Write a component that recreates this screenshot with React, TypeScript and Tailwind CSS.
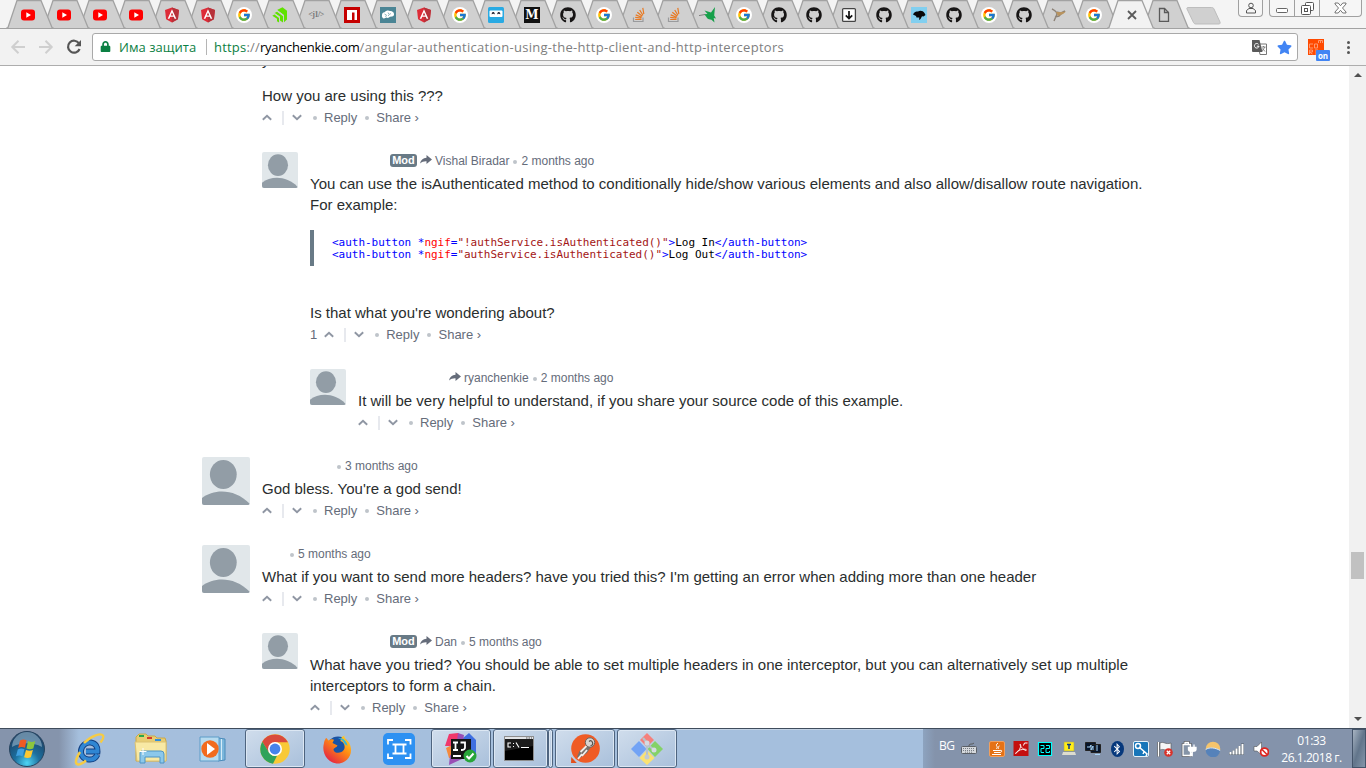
import type { ReactNode } from "react";
import { FaGithub, FaBluetoothB, FaStar, FaLock } from "react-icons/fa";
import { FcGoogle } from "react-icons/fc";

/* ---------- tab icons ---------- */

const YouTube = () => (
  <svg viewBox="0 0 16 16" className="size-4">
    <rect x="1" y="2.500" width="14" height="11" rx="3" fill="#f00" />
    <path d="M6.300 5.200v5.600L11 8z" fill="#fff" />
  </svg>
);
const Angular = () => (
  <svg viewBox="0 0 16 16" className="size-4">
    <path d="M8 .5 15 3l-1.100 9.200L8 15.500 2.100 12.200 1 3z" fill="#dd2c38" />
    <path d="M8 .5 15 3l-1.100 9.200L8 15.500z" fill="#b7323a" />
    <path d="M8 2.300 3.700 11.800h1.700l.8-2.100h3.600l.8 2.100h1.700zM8 5.400l1.300 3H6.700z" fill="#fff" />
  </svg>
);
const Google = () => (
  <span className="flex size-4 items-center justify-center rounded-full bg-white">
    <FcGoogle size={14} />
  </span>
);
const Github = () => <FaGithub size={16} color="#171515" />;
const Envato = () => (
  <svg viewBox="0 0 16 16" className="size-4" fill="#60e200">
    <path d="M5 3 10.500.3 15 3.700v8.800l-3 2.700V8z" />
    <path d="m2.500 6 2.500-1.300 6 4.600v6.200L8 13.500v-4z" />
    <path d="m.3 8.700 2.200-1.200L7 11v4.500l-2-1.300v-2.500z" />
    <path d="m5 3.200 6.500 5.100v7M2.500 6.300l5 3.900v5" fill="none" stroke="#cdcdcd" strokeWidth=".7" />
  </svg>
);
const CodeTag = () => (
  <span className="w-4 text-center font-['Liberation_Serif'] text-[8px] leading-4 font-bold tracking-[-0.5px] whitespace-nowrap text-[#777]">
    &lt;j1/&gt;
  </span>
);
const Npm = () => (
  <svg viewBox="0 0 16 16" className="size-4">
    <path d="M0 0h16v16H0z" fill="#c60000" />
    <path d="M3 3h10v10h-2.500V5.500H8V13H3z" fill="#fff" />
  </svg>
);
const Brain = () => (
  <svg viewBox="0 0 16 16" className="size-4">
    <path d="M0 0h16v16H0z" fill="#4b8595" />
    <path d="M2 8c0-1.500 1-2.500 2.500-2.700C6 3.300 8.500 3 10 4c2-.3 4 1.200 4 3 .3 1.500-.8 2.500-2 2.500l-2 .3c-1 1.200-2.500 1.400-3.500.7L4 11.500C2.500 11.500 1.500 9.500 2 8z" fill="#fff" />
    <path d="m4.500 7 2 1-1 2M8 5.500l1 2 2-1M9 9l-1-1" fill="none" stroke="#6b9ba8" strokeWidth=".7" />
  </svg>
);
const Faces = () => (
  <svg viewBox="0 0 16 16" className="size-4">
    <rect width="16" height="16" rx="1.500" fill="#29aae3" />
    <rect x="1.500" y="3.500" width="13" height="6.500" rx="1" fill="#fff" />
    <path d="M3.800 7.500V6q1.400-2 2.800 0v1.500l-.8-.8h-1.200zM9.400 7.500V6q1.400-2 2.800 0v1.500l-.8-.8h-1.200z" fill="#112" />
  </svg>
);
const Medium = () => (
  <span className="flex size-4 items-center justify-center bg-[#111] font-['DejaVu_Serif'] text-[12px] leading-none font-bold text-white">
    M
  </span>
);
const Stack = () => (
  <svg viewBox="0 0 16 16" className="size-4" fill="none">
    <path d="M2.500 10.500v4h9.500v-4" stroke="#9a9b9d" strokeWidth="1.200" />
    <path d="M4.200 12.500h6.300M4.200 10.300l6.300.9M4.700 7.900l6 2.300M6.300 5.300l5 4M8.700 3l3.300 5.300M11.800.8l1 6.200" stroke="#e87922" strokeWidth="1.200" />
  </svg>
);
const Hummingbird = () => (
  <svg viewBox="0 0 18 16" className="-ml-0.5 h-4 w-[18px] shrink-0" fill="#16a04a">
    <path d="M5 7.300 8.500 7 5.500 3.500l6.500 2L16 0l-.8 8.500L17 11.500l-2.300-.6.800 4.600-3-2.800-2.500-.4C8 11.800 7.500 9.800 6.500 8.700z" />
    <path d="M0 8.600 6 7.500" stroke="#777" strokeWidth=".9" />
  </svg>
);
const Download = () => (
  <svg viewBox="0 0 16 16" className="size-4" fill="none" stroke="#111">
    <rect x="1.600" y="1.600" width="12.800" height="12.800" rx="1" fill="#fff" stroke="#444" strokeWidth="1.300" />
    <path d="M8 4v7.500M4.800 8.300 8 11.500l3.200-3.200" strokeWidth="1.700" />
  </svg>
);
const Kiwi = () => (
  <svg viewBox="0 0 16 16" className="size-4">
    <path d="M0 0h16v16H0z" fill="#82cfef" />
    <path d="M2 7.500C3 5 5 4.500 7 4.500 9.500 3 12 4 13.500 6l1 2-2 1.500-1.500-.3L9.500 12 8 13l.3-2.500H5.500L5 9z" fill="#090909" />
  </svg>
);
const Gazelle = () => (
  <svg viewBox="0 0 16 16" className="size-4" fill="none">
    <path d="M1 2c2 1 3 1 4 3l5 1 4-2M6 7l-3 7M5 6l5 1-2 2-4 1" stroke="#8c8277" strokeWidth="1.400" />
    <path d="m5 5 6 0 4-.5-3 2.500-5 2z" fill="#b8935e" />
  </svg>
);
const Doc = () => (
  <svg viewBox="0 0 16 16" className="size-4" fill="none" stroke="#5a5a5a" strokeWidth="1.300">
    <path d="M3.500 1.500h5l4 4v8.800h-9z" />
    <path d="M8.500 1.500v4h4" />
  </svg>
);
const Cross = () => (
  <svg viewBox="0 0 16 16" className="ml-[5px] size-4 shrink-0" stroke="#5a5a5a" strokeWidth="1.800">
    <path d="m4 4 8 8m0-8-8 8" />
  </svg>
);

const tabs: (() => ReactNode)[] = [
  YouTube, YouTube, YouTube, YouTube, Angular, Angular, Google, Envato, CodeTag, Npm, Brain, Angular,
  Google, Faces, Medium, Github, Google, Stack, Stack, Hummingbird, Google, Github, Github, Download,
  Github, Kiwi, Github, Google, Github, Gazelle, Google, Cross, Doc,
];
const ACTIVE = 31;

function Tab({ index, icon: Icon }: { index: number; icon: () => ReactNode }) {
  const active = index === ACTIVE;
  return (
    <div
      className={`relative h-[29px] shrink-0 pt-[7px] ${index < 17 ? "w-9 pl-2.5" : "w-[35px] pl-[9px]"}`}
      style={{ zIndex: active ? 60 : 50 - index }}
    >
      <svg
        viewBox="0 0 50 29"
        className={`absolute top-0 h-[29px] w-[50px] ${index < 17 ? "-left-1" : "-left-[5px]"}`}
      >
        <path d="M0 28.500 2 27.500 11 .5H35L46 27.500l2 1z" fill={active ? "#f2f2f2" : "#d0d0d0"} />
        <path d="M0 28.500 2 27.500 11 .5H35L46 27.500l2 1" fill="none" stroke="#a2a2a2" strokeWidth="1.300" />
        {!active && <path d="M0 28.500h50" stroke="#a2a2a2" />}
      </svg>
      <div className="relative flex size-4 items-center justify-center">
        <Icon />
      </div>
    </div>
  );
}

function TabStrip() {
  return (
    <div className="relative flex h-[29px] shrink-0 border-b border-[#a2a2a2] bg-[#f4f4f4] pl-2.5">
      {tabs.map((icon, i) => (
        <Tab key={i} index={i} icon={icon} />
      ))}
      <svg viewBox="0 0 36 18" className="mt-[7px] ml-[4px] h-[18px] w-9 shrink-0">
        <path d="M2 .5h23.500c1.500 0 2 .5 2.500 1.500l6 13c.4 1 0 2-1 2H10c-1 0-2-.5-2.500-1.500L1 2C.6 1 1 .5 2 .5z" fill="#d0d0d0" stroke="#bdbdbd" />
      </svg>
      <div className="ml-auto flex h-[17px] w-[25px] items-center justify-center rounded-b border border-t-0 border-[#a0a0a0] bg-[#f6f6f6]">
        <svg viewBox="0 0 12 12" className="size-3" fill="none" stroke="#555">
          <circle cx="6" cy="3.500" r="2.300" />
          <path d="M1.500 11V8.500L4 6.500h4l2.500 2V11z" />
        </svg>
      </div>
      <div className="mr-1 ml-[6px] flex h-[17px] w-[93px] rounded-b border border-t-0 border-[#a0a0a0] bg-[#f6f6f6]">
        <div className="flex w-[25px] items-center justify-center border-r border-[#a0a0a0]">
          <svg viewBox="0 0 12 12" className="size-3" fill="#fff" stroke="#666">
            <rect x=".5" y="6.500" width="11" height="4" rx="1" />
          </svg>
        </div>
        <div className="flex w-[25px] items-center justify-center border-r border-[#a0a0a0]">
          <svg viewBox="0 0 13 13" className="size-[13px]" fill="#fff" stroke="#555">
            <rect x="4.500" y=".5" width="8" height="8" rx="1" />
            <rect x=".5" y="3.500" width="9" height="9" rx="1" />
            <rect x="3.500" y="6.500" width="3" height="3" />
          </svg>
        </div>
        <div className="flex flex-1 items-center justify-center">
          <svg viewBox="0 0 13 12" className="h-3 w-[13px]" fill="#fff" stroke="#666" strokeWidth=".9">
            <path d="M1 1h3.200L6.500 3.700 8.800 1H12v1L8.500 6 12 10v1H8.800L6.500 8.300 4.200 11H1v-1L4.500 6 1 2z" />
          </svg>
        </div>
      </div>
    </div>
  );
}

function Toolbar() {
  return (
    <div className="relative z-10 flex h-[37px] shrink-0 items-center border-b border-[#adadad] bg-[#f2f2f2] font-['Open_Sans','Noto_Sans',sans-serif]">
      <svg viewBox="0 0 92 36" className="h-9 w-[92px] shrink-0" fill="none" strokeWidth="2">
        <path d="M25 18H12.500m6-6.200L12.300 18l6.200 6.200M39 18h12.500m-6-6.200 6.200 6.200-6.200 6.200" stroke="#cfcfcf" />
        <path d="M79 14.300A6 6 0 1 0 79.600 20" stroke="#555" strokeWidth="2.200" />
        <path d="M81 11v6.300h-6.300z" fill="#555" />
      </svg>
      <div className="flex h-7 w-[1206px] items-center rounded-[3px] border border-[#a9a9a9] bg-white text-[13px] leading-[18px]">
        <FaLock size={11} color="#0b8043" className="-mt-0.5 ml-[7px]" />
        <span className="ml-[8px] w-[78px] tracking-[0.05px] whitespace-nowrap text-[#0b8043]">Има защита</span>
        <span className="ml-[9px] h-4 w-px bg-[#b5b5b5]" />
        <span className="ml-[7px] tracking-[0.29px] whitespace-nowrap text-[#808080]">
          <span className="tracking-[0.2px]">
            <span className="text-[#0b8043]">https</span>://
          </span>
          <span className="tracking-[-0.25px] text-black">ryanchenkie.com</span>
          /angular-authentication-using-the-http-client-and-http-interceptors
        </span>
        <svg viewBox="0 0 15 15" className="mr-[10px] ml-auto size-[15px]">
          <path d="M6 4h8.500v10.500H8z" fill="#fff" stroke="#777" />
          <path d="M0 0h7.500l3 12H1a1 1 0 0 1-1-1z" fill="#5a5a5a" />
          <path d="M6.500 4.300A2.300 2.300 0 1 0 7 6.200H4.800" fill="none" stroke="#fff" />
          <path d="M9.500 7h4M11.500 6v1M10 11l3-4M10.500 8.500l2.500 3" fill="none" stroke="#777" strokeWidth=".9" />
        </svg>
        <FaStar size={15} color="#4285f4" className="mr-[5px]" />
      </div>
      <div className="relative ml-[10px] size-4 bg-[#ff4a00]">
        <svg viewBox="0 0 16 16" className="size-4" fill="none" stroke="#ff9a70">
          <path d="M5 5H1.500v4H5M6.500 5h3v4h-3zM1.500 15v-4h3v2h-3l3 2M7 11h3m-3 2h3m-3 2h3M10.500 4V1.500h4V4m-2-2v2" />
        </svg>
        <span className="absolute top-[11px] left-2 h-[11px] w-[14px] rounded-[1px] bg-[#4285f4] text-center text-[8px] leading-[11px] font-bold text-white">
          on
        </span>
      </div>
      <div className="ml-[23px] flex flex-col gap-[2px]">
        {[0, 1, 2].map((d) => (
          <span key={d} className="size-[3px] rounded-full bg-[#555]" />
        ))}
      </div>
    </div>
  );
}

/* ---------- comments ---------- */

function Avatar({ big }: { big?: boolean }) {
  return (
    <svg viewBox="0 0 48 48" className={`mr-3 shrink-0 rounded-[2px] ${big ? "size-12" : "size-9"}`}>
      <path d="M0 0h48v48H0z" fill="#e1e7ea" />
      <ellipse cx="21.300" cy="17.500" rx="13.400" ry="14.500" fill="#929da6" />
      <path d="M0 41c12-9.500 33-9.500 47.500 5.500V48H0z" fill="#929da6" />
    </svg>
  );
}

const Dot = () => <span className="mt-px size-[4px] shrink-0 rounded-full bg-[#bfc4ca]" />;

function Footer({ votes }: { votes?: string }) {
  return (
    <div className="flex h-[21px] items-center text-[13px] leading-[21px] text-[#656c7a]">
      {votes && <span className="mr-[7px]">{votes}</span>}
      <svg viewBox="0 0 10 7" className="h-[7px] w-[10px]" fill="none" stroke="#8f96a3" strokeWidth="1.900">
        <path d="m.8 5.700 4.200-4 4.200 4" />
      </svg>
      <span className="ml-[10px] h-[14px] w-[2px] bg-[#e7e9ee]" />
      <svg viewBox="0 0 10 7" className="mr-[11px] ml-[8px] h-[7px] w-[10px]" fill="none" stroke="#8f96a3" strokeWidth="1.900">
        <path d="m.8 1.200 4.200 4 4.200-4" />
      </svg>
      <Dot />
      <span className="mr-[8px] ml-[7px]">Reply</span>
      <Dot />
      <span className="ml-[7px]">Share ›</span>
    </div>
  );
}

interface PostProps {
  indent: string;
  nameWidth: string;
  big?: boolean;
  mod?: boolean;
  replyTo?: string;
  time: string;
  votes?: string;
  children: ReactNode;
}

function Post({ indent, nameWidth, big, mod, replyTo, time, votes, children }: PostProps) {
  return (
    <article className={`flex pb-6 ${indent}`}>
      <Avatar big={big} />
      <div className="min-w-0 flex-1">
        <header className="mb-[3px] flex h-[18px] items-center pt-px text-[12px] leading-[17px] whitespace-nowrap text-[#656c7a]">
          <span className={`shrink-0 ${nameWidth}`} />
          {mod && (
            <span className="-mt-[2px] mr-[3px] h-[13px] w-[27px] rounded-[3px] bg-[#687a86] text-center text-[11px] leading-[13px] font-bold text-white">
              Mod
            </span>
          )}
          {replyTo && (
            <>
              <svg viewBox="0 0 12 10" className="-mt-[3px] mr-[3px] h-[10px] w-3" fill="#656c7a">
                <path d="M6.500 0 12 4.600 6.500 9V6.300C4 6.200 1.800 6.800 0 8.600.6 5 3 3 6.500 2.800z" />
              </svg>
              <span className="mr-[4px]">{replyTo}</span>
            </>
          )}
          <span className="-mt-px flex">
            <Dot />
          </span>
          <span className="ml-[4px]">{time}</span>
        </header>
        <div className="text-[15px] leading-[21px] text-[#2a2e2e]">{children}</div>
        <div className="pt-px">
          <Footer votes={votes} />
        </div>
      </div>
    </article>
  );
}

function CodeLine({ value, label }: { value: string; label: string }) {
  return (
    <div className="text-[#00f]">
      &lt;auth-button *<span className="text-[#f00]">ngif</span>=
      <span className="text-[#a31515]">"{value}"</span>&gt;
      <span className="text-black">{label}</span>&lt;/auth-button&gt;
    </div>
  );
}

function Comments() {
  return (
    <main className="h-full w-[1165px] overflow-hidden font-['Liberation_Sans',Arial,sans-serif]">
      <div className="-mt-[17px] mb-6 pl-[262px]">
        <p className="mb-[15px] text-[15px] leading-[21px] text-[#2a2e2e]">y</p>
        <p className="mb-px text-[15px] leading-[21px] text-[#2a2e2e]">How you are using this ???</p>
        <Footer />
      </div>
      <Post indent="pl-[262px]" nameWidth="w-[80px]" mod replyTo="Vishal Biradar" time="2 months ago" votes="1">
        <p>
          You can use the isAuthenticated method to conditionally hide/show various elements and also allow/disallow
          route navigation.
          <br />
          For example:
        </p>
        <pre className="mt-[15px] mb-9 h-9 border-l-4 border-[#687a86] pt-[7px] pl-[18px] font-['DejaVu_Sans_Mono',monospace] text-[11px] leading-3 tracking-[-0.024px]">
          <CodeLine value="!authService.isAuthenticated()" label="Log In" />
          <CodeLine value="authService.isAuthenticated()" label="Log Out" />
        </pre>
        <p>Is that what you're wondering about?</p>
      </Post>
      <Post indent="pl-[310px]" nameWidth="w-[91px]" replyTo="ryanchenkie" time="2 months ago">
        It will be very helpful to understand, if you share your source code of this example.
      </Post>
      <Post indent="pl-[202px]" nameWidth="w-[75px]" big time="3 months ago">
        God bless. You're a god send!
      </Post>
      <Post indent="pl-[202px]" nameWidth="w-[28px]" big time="5 months ago">
        What if you want to send more headers? have you tried this? I'm getting an error when adding more than one header
      </Post>
      <Post indent="pl-[262px]" nameWidth="w-[80px]" mod replyTo="Dan" time="5 months ago">
        What have you tried? You should be able to set multiple headers in one interceptor, but you can alternatively
        set up multiple interceptors to form a chain.
      </Post>
    </main>
  );
}

function Scrollbar() {
  return (
    <div className="flex w-[17px] flex-col items-center justify-between bg-[#f1f1f1] py-[7px]">
      <svg viewBox="0 0 8 4" className="h-1 w-2" fill="#505050">
        <path d="m0 4 4-4 4 4z" />
      </svg>
      <div className="mt-[475px] mb-auto h-[27px] w-[13px] bg-[#c1c1c1]" />
      <svg viewBox="0 0 8 4" className="h-1 w-2" fill="#505050">
        <path d="m0 0 4 4 4-4z" />
      </svg>
    </div>
  );
}

/* ---------- taskbar ---------- */

const StartOrb = () => (
  <svg viewBox="0 0 38 38" className="size-[38px]">
    <defs>
      <radialGradient id="orb" cx=".5" cy=".9" r=".8">
        <stop offset="0" stopColor="#4fd5f5" />
        <stop offset=".45" stopColor="#1c6f9e" />
        <stop offset="1" stopColor="#1d4266" />
      </radialGradient>
    </defs>
    <circle cx="19" cy="19" r="17.500" fill="url(#orb)" stroke="#27445f" />
    <path d="M4 17a15 15 0 0 1 30 0c-9-5-21-5-30 0z" fill="#8fb0c8" opacity=".65" />
    <path d="M12 10.500c2.500-1.500 4.500-1.300 6.500-.2L17 17.800c-2.500-1-4.500-1-6.800.2z" fill="#ee5a24" />
    <path d="M20 11c2.500 1.200 4.800 1.200 7.300 0l-2 7.500c-2.500 1-4.500 1-6.800 0z" fill="#8cc63e" />
    <path d="M9.800 19.500c2.200-1.200 4.500-1.200 6.700-.2l-2 7c-2.200-1-4.200-1-6.500 0z" fill="#3fa0e0" />
    <path d="M18 20c2.400 1 4.700 1 6.900 0l-2 7.200c-2.200 1-4.500 1-6.800 0z" fill="#fdc830" />
  </svg>
);
const Explorer6 = () => (
  <svg viewBox="0 0 34 34" className="size-[34px]" fill="none">
    <path d="M25.500 22.500c-2 4-5.500 5.500-9 5C11 27 8.500 23 9 18.500c.7-5 5-8.500 9.500-8 5 .5 7.500 4.500 7 9H14" stroke="#123f80" strokeWidth="6" />
    <path d="M25.500 22.500c-2 4-5.500 5.500-9 5C11 27 8.500 23 9 18.500c.7-5 5-8.500 9.500-8 5 .5 7.500 4.500 7 9H14" stroke="#2f86d3" strokeWidth="4" />
    <path d="M12 11c8-8 17-10 19-7.500 1.200 2-.5 4.500-2.500 7M8 20c-5 8-5 12-2 12.500 2 .2 5-1.500 8-4" stroke="#f5cb45" strokeWidth="2.400" />
  </svg>
);
const Folder = () => (
  <svg viewBox="0 0 34 32" className="h-8 w-[34px]">
    <path d="M2 4 5 1h7l2 2h7l2 2h8l1 3v20H2z" fill="#e8cd73" stroke="#c9a84a" />
    <path d="M5 2h5v2H5z" fill="#2aa84a" />
    <path d="M13 4h5v2h-5z" fill="#d53b2b" />
    <path d="M21 6h6v2h-6z" fill="#2e8ede" />
    <path d="M1 9h31v19H3z" fill="#f8e9a4" stroke="#dcc272" />
    <path d="M6 30V20q0-2 2-2h19q3 0 3 3v9h-4v-6H11v6z" fill="#8cc8ea" stroke="#4f94c4" />
    <path d="M9 15v7M5.500 18.500h7" stroke="#fff" />
  </svg>
);
const Player = () => (
  <svg viewBox="0 0 30 28" className="h-7 w-[30px]">
    <path d="m20 3 7 1v21l-7 1z" fill="#7cb7dc" stroke="#4b8cbb" />
    <path d="M2 2h19v24H2z" fill="#b7dbef" stroke="#5c9cc8" />
    <path d="M23.500 4v21" stroke="#d5ecf8" />
    <circle cx="12" cy="14" r="8.700" fill="#f26b1d" />
    <path d="M9 8v12l8-6z" fill="#fff" />
  </svg>
);
const Chrome = () => (
  <svg viewBox="0 0 30 30" className="size-[30px]">
    <circle cx="15" cy="15" r="14.700" fill="#f8c937" />
    <path d="M2.300 7.700A14.700 14.700 0 0 1 27.900 8.200H15l-6.300 10z" fill="#d94a3d" />
    <path d="M2.300 7.700 9 18.500 13 22l4-.3-4 8A14.700 14.700 0 0 1 2.300 7.700z" fill="#2fa35a" />
    <circle cx="15" cy="15" r="7" fill="#fff" />
    <circle cx="15" cy="15" r="5.400" fill="#4583ec" />
  </svg>
);
const Firefox = () => (
  <svg viewBox="0 0 30 30" className="ml-0.5 size-[30px]">
    <defs>
      <linearGradient id="fx" x1="1" y1="0" x2=".2" y2="1">
        <stop offset="0" stopColor="#ffe431" />
        <stop offset=".45" stopColor="#ff8c13" />
        <stop offset="1" stopColor="#e31b48" />
      </linearGradient>
    </defs>
    <circle cx="15" cy="14" r="11.500" fill="#1a54a5" />
    <path d="M3 4c1 0 1.500 1.500 2.500 2.500C8 4.800 10 5 11 5.700L9.500 9l5 2.500c-1 2.500-4 2-4 4.500 1 3 5 3.500 8 2 4-2 4-7 1-10l-2-1c0-3 2-5 4-5.500-1 3 3 4 5 8 5 11-3 20-11.500 20C5 29.500-2 19 1 9c.3-2 1-3.500 2-5z" fill="url(#fx)" />
    <path d="M15 4c5-.5 9 3 9.500 8-1-1-1.500-1.500-2.500-1.500C21 7 18.500 5.500 15 4z" fill="#2db7dc" />
  </svg>
);
const Capture = () => (
  <svg viewBox="0 0 32 32" className="size-8" fill="none" stroke="#fff" strokeWidth="1.800">
    <rect width="32" height="32" rx="5" fill="#2d91f2" stroke="none" />
    <path d="M5 11.500V7h5M22 7h5.500v4.500M5 20.500V25h5M22 25h5.500v-4.500M9.500 11.500h14M9.500 20.500h14M12.500 11.500v9M20.500 11.500v9" />
  </svg>
);
const Idea = () => (
  <svg viewBox="0 0 32 32" className="size-8">
    <path d="m1 15 6-3v13H4z" fill="#f58a3c" />
    <path d="m4 1 9-1 8 7-4 6H0z" fill="#f0386b" />
    <path d="m18 5 6-5 7 7v17l-6 4-7-8z" fill="#3f6fe0" />
    <path d="m13 0 6 2-1 6h-6zM5 22l12 4-13 6z" fill="#9a4fb5" />
    <path d="M6 6h20v20H6z" fill="#151515" />
    <path d="M8 9.500h5m-2.500 0V17M8 17h5M15.500 9.500H20v5q0 2.500-4 2.500M8 23h8" fill="none" stroke="#fff" strokeWidth="1.800" />
    <circle cx="25" cy="23" r="6.500" fill="#28a539" />
    <path d="m21.500 23 2.500 2.500 4.500-5" fill="none" stroke="#fff" strokeWidth="2" />
  </svg>
);
const Console = () => (
  <svg viewBox="0 0 30 25" className="-ml-1 h-[25px] w-[30px]">
    <path d="M.5.500h29v24H.5z" fill="#000" stroke="#8d8d8d" />
    <path d="M1 1h28v2H1z" fill="#e3e5e8" />
    <path d="M22 2h1.500m1 0H26m1 0h1" stroke="#555" />
    <path d="M1 15 29 10V3H1z" fill="#1c1c1c" />
    <path d="M7 7H4v4h3M9 7.500h1M9 10.500h1M12 6.500l3 5M17 11.500h8" fill="none" stroke="#fff" strokeWidth="1.100" />
  </svg>
);
const Postman = () => (
  <svg viewBox="0 0 32 32" className="size-8">
    <circle cx="16.500" cy="15.500" r="14.300" fill="#ef5b25" />
    <path d="m2 30 .3-6 5.500 6z" fill="#e2501c" />
    <path d="m18 12-7.500 6-2.500 6 3 1 7-5 4-6z" fill="#77706b" />
    <path d="m17.500 13-6 6M13 21l-4 5M18 17l-5 6" fill="none" stroke="#f1ece8" strokeWidth="1.800" />
    <circle cx="21" cy="9.500" r="4.700" fill="#d8d4d0" stroke="#6b645f" />
    <path d="M20 8.500q2.500-2 3.500 1t-2 3" fill="none" stroke="#55504c" strokeWidth="1.200" />
  </svg>
);
const GitDiamond = () => (
  <svg viewBox="0 0 32 32" className="size-8">
    <path d="m16 0 7 7-7 7-7-7z" fill="#f5807c" />
    <path d="m8 8 7.500 8L8 24l-8-8z" fill="#72a3f5" />
    <path d="m24 8 8 8-8 8-7.500-8z" fill="#84d268" />
    <path d="m16 17 7.500 8L16 32l-7.500-7z" fill="#fbe272" />
    <path d="m12 5 4 5v14M16 11l7 6" fill="none" stroke="#b8c2ca" strokeWidth="2.200" />
    <circle cx="16" cy="10" r="2.500" fill="#d4dbe2" />
    <circle cx="16" cy="24" r="2.500" fill="#c3cbd2" />
    <circle cx="23" cy="17" r="2.500" fill="#d4dbe2" />
  </svg>
);

const apps: { icon: () => ReactNode; open?: boolean; stacked?: boolean }[] = [
  { icon: Explorer6 },
  { icon: Folder },
  { icon: Player },
  { icon: Chrome, open: true },
  { icon: Firefox },
  { icon: Capture },
  { icon: Idea, open: true },
  { icon: Console, open: true, stacked: true },
  { icon: Postman, open: true },
  { icon: GitDiamond, open: true },
];

const openStyle =
  "rounded-[3px] border border-[#4e647f] bg-linear-to-br from-[#d0ddec] to-[#a9c0db] shadow-[inset_0_0_0_1px_#dce7f3]";

const Tray16 = ({ children }: { children: ReactNode }) => (
  <svg viewBox="0 0 16 16" className="size-4 shrink-0">
    {children}
  </svg>
);

function Tray() {
  return (
    <div className="flex h-full items-center gap-2 font-['Open_Sans','Noto_Sans',sans-serif] text-white">
      <span className="-mt-1.5 w-[15px] text-[12px] tracking-[-0.5px]">BG</span>
      <div className="mr-1 -ml-px">
        <Tray16>
          <path d="M8 5c0-3 3-1 5-3" fill="none" stroke="#555" />
          <rect x=".5" y="5.500" width="15" height="7" rx="1" fill="#d5d8dc" stroke="#5a5f66" />
          <path d="M2 7.500h12M2 9.500h12M4 11.200h8" stroke="#777d85" strokeDasharray="1 1" />
        </Tray16>
      </div>
      <Tray16>
        <rect x=".5" y=".5" width="15" height="15" rx="1.500" fill="#e57216" stroke="#f0a060" />
        <path d="M9 2c-4 3 1 3-1.500 6M10.500 5c-2.500 1 0 2-1.500 3M4 9.500h7c2.500-1 2 2 0 2H5M3 13.500h9" fill="none" stroke="#fff" />
      </Tray16>
      <Tray16>
        <path d="M.5 0h15v15H.5z" fill="#c40f0f" />
        <path d="M2.500 12.500C5.500 11 8.500 6 7.500 3.500 6.500 2 6.500 6 12.500 9.500c2 0 1-2-3-1-3 0-6 2-7 4z" fill="none" stroke="#fff" strokeWidth=".9" />
        <path d="M10.500 4.500 11.500 2h3" fill="none" stroke="#fff" />
      </Tray16>
      <Tray16>
        <path d="M1.500 1.500h13v13h-13z" fill="#000" stroke="#0ff" strokeWidth="1.200" />
        <path d="M3.500 4.500H7v3H4v4h3M9 4.500h3.500v3H9v4h3.500V10" fill="none" stroke="#0ff" />
      </Tray16>
      <Tray16>
        <path d="M3 1h10v9H3z" fill="#ffed19" stroke="#a8a45a" strokeWidth=".6" />
        <path d="M6 3.500h4M8 3.500V8" stroke="#0b3a88" strokeWidth="1.500" />
        <path d="m2 11-1 3h14l-1-3z" fill="#dcdcd0" />
      </Tray16>
      <Tray16>
        <path d="M.5 1.500h10v8H.5zM6 3.500h9.500v8H6z" fill="#06142b" stroke="#222" />
        <path d="M2 6h3l1-2v5l2-4v4M12 4v6M10 13.500h5" fill="none" stroke="#a7d5f8" />
      </Tray16>
      <span className="flex size-4 items-center justify-center">
        <span className="flex h-4 w-[13px] items-center justify-center rounded-[50%] bg-[#06387c]">
          <FaBluetoothB size={12} />
        </span>
      </span>
      <Tray16>
        <rect x=".5" y=".5" width="15" height="15" rx="1.500" fill="#1675b9" stroke="#e4f0f8" />
        <path d="m6 6 8 7-1 2M11 11l-1 2" fill="none" stroke="#fff" strokeWidth="1.500" />
        <circle cx="5" cy="5" r="2.500" fill="none" stroke="#fff" strokeWidth="1.500" />
      </Tray16>
      <Tray16>
        <path d="M1.500 1v14.500" stroke="#555" strokeWidth="2.500" />
        <path d="M1.500 1v14.500" stroke="#fff" strokeWidth="1.300" />
        <path d="M3 2c4-2 5 2 11 0v7c-4 2-7-2-11 0z" fill="#f5f6f7" stroke="#555" strokeWidth=".6" />
        <circle cx="11.500" cy="11.500" r="4.300" fill="#d8322b" />
        <path d="m9.800 9.800 3.400 3.400m0-3.400-3.400 3.400" stroke="#fff" strokeWidth="1.300" />
      </Tray16>
      <Tray16>
        <path d="M2 3.500h7.500v11H2zM4 1.500h3.500v2H4z" fill="#8594a7" stroke="#444" strokeWidth="2.400" />
        <path d="M2 3.500h7.500v11H2zM4 1.500h3.500v2H4z" fill="#8594a7" stroke="#fff" strokeWidth="1.300" />
        <path d="M7.500 6.500H15v2c0 2.500-7.500 2.500-7.500 0zM9.500 6.500V3.500M13 6.500V3.500M11.200 10v4.500H8.500" fill="#fff" stroke="#fff" strokeWidth="1.300" />
      </Tray16>
      <Tray16>
        <circle cx="8" cy="8" r="7.300" fill="#f5c46b" />
        <path d="M.7 8.500c3-2.500 9-2.500 14.600 1A7.300 7.300 0 0 1 .7 8.500z" fill="#5582ba" />
        <path d="M.7 8.500c4-2.500 9-2 14.500 1" stroke="#d9e8f5" fill="none" />
      </Tray16>
      <Tray16>
        <path d="M1.500 14v-3M4.500 14V9.500M7.500 14V7.500M10.500 14V5M13.500 14V2.500" stroke="#55606d" strokeWidth="3" />
        <path d="M1.500 13.500V11M4.500 13.500V9.500M7.500 13.500v-6M10.500 13.500V5M13.500 13.500V3" stroke="#fff" strokeWidth="2" />
      </Tray16>
      <Tray16>
        <path d="M1 5.500h3l4.500-4.500v13L4 10H1z" fill="#fff" stroke="#555" strokeWidth=".6" />
        <circle cx="11.500" cy="11" r="3.900" fill="#fff" stroke="#dd2620" strokeWidth="1.800" />
        <path d="m9 8.500 5 5" stroke="#dd2620" strokeWidth="1.600" />
      </Tray16>
      <div className="w-[70px] pr-px text-center text-[12px] leading-[17px] tracking-[-0.45px] whitespace-nowrap">
        01:33
        <br />
        26.1.2018 г.
      </div>
    </div>
  );
}

function Taskbar() {
  return (
    <footer className="flex h-10 shrink-0 border-t border-[#3f4c5c] bg-[#a5bfdd] shadow-[inset_0_1px_0_#c3d3e5]">
      <div className="flex w-[59px] items-center bg-[#8594ac] pl-2">
        <StartOrb />
      </div>
      <div className="flex gap-[2px] bg-linear-to-r from-[#8594ac] to-[#a5bfdd] to-[20px]">
        {apps.map(({ icon: Icon, open, stacked }, i) => (
          <div key={i} className="flex h-[39px] w-[60px]">
            <div
              className={`flex items-center justify-center ${stacked ? "w-[55px]" : "w-[60px]"} ${open ? openStyle : ""}`}
            >
              <Icon />
            </div>
            {stacked && <div className={`w-[5px] ${openStyle}`} />}
          </div>
        ))}
      </div>
      <div className="ml-auto flex bg-linear-to-r from-[#8da3bf] to-[#8493ab] to-[12px] pl-[16px]">
        <Tray />
        <div className="ml-[5px] w-[14px] border border-[#44546a] bg-linear-to-br from-[#a8b4c2] via-[#62758b] to-[#8496aa]" />
      </div>
    </footer>
  );
}

export default function App() {
  return (
    <div className="flex h-[768px] w-[1366px] flex-col overflow-hidden bg-white">
      <TabStrip />
      <Toolbar />
      <div className="flex h-[662px] shrink-0 justify-between">
        <Comments />
        <Scrollbar />
      </div>
      <Taskbar />
    </div>
  );
}
